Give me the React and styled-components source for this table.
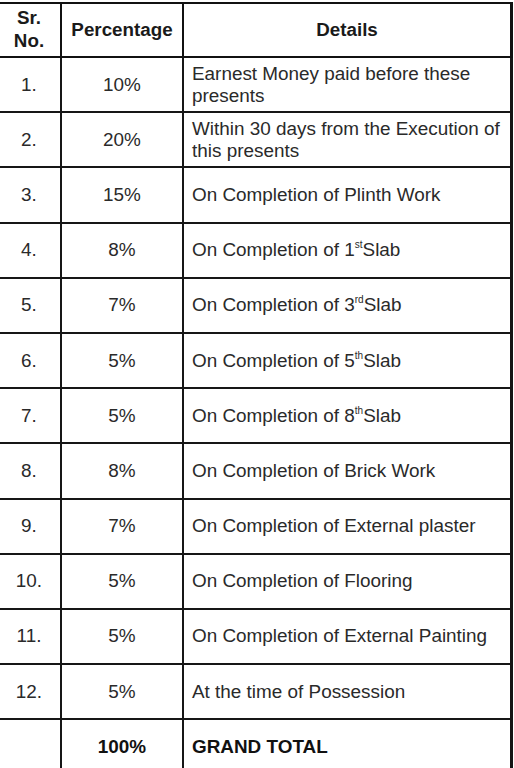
import React from "react";
import styled, { createGlobalStyle } from "styled-components";

const Global = createGlobalStyle`
  html, body { margin: 0; padding: 0; background: #fff; }
  body { font-family: "Liberation Sans", Arial, sans-serif; color: #262626; }
`;

const Page = styled.div`
  width: 514px;
  height: 768px;
  overflow: hidden;
  padding-top: 2px;
  box-sizing: border-box;
`;

const Table = styled.table`
  border-collapse: collapse;
  table-layout: fixed;
  width: 517px;
  margin-left: -4px;
`;

const HeadRow = styled.tr`
  height: 54px;
`;

const Row = styled.tr`
  height: 55.2px;
`;

const HeadCell = styled.th`
  border: 2px solid #111;
  padding: 0 0 2px;
  font-size: 18.8px;
  font-weight: bold;
  line-height: 23px;
  text-align: center;
  color: #1a1a1a;
  &:last-child { border-right-width: 3px; }
`;

const Cell = styled.td`
  border: 2px solid #161616;
  padding: 0 ${(p) => (p.$left ? "8px" : "0")};
  font-size: 18.9px;
  line-height: 22px;
  text-align: ${(p) => (p.$left ? "left" : "center")};
  font-weight: ${(p) => (p.$bold ? "bold" : "normal")};
  color: ${(p) => (p.$bold ? "#111" : "#2a2a2a")};
  &:last-child { border-right-width: 3px; }
`;

const Sup = styled.sup`
  font-size: 10px;
  line-height: 0;
  vertical-align: 8px;
`;

const rows = [
  ["1.", "10%", "Earnest Money paid before these presents"],
  ["2.", "20%", "Within 30 days from the Execution of this presents"],
  ["3.", "15%", "On Completion of Plinth Work"],
  ["4.", "8%", ["1", "st"]],
  ["5.", "7%", ["3", "rd"]],
  ["6.", "5%", ["5", "th"]],
  ["7.", "5%", ["8", "th"]],
  ["8.", "8%", "On Completion of Brick Work"],
  ["9.", "7%", "On Completion of External plaster"],
  ["10.", "5%", "On Completion of Flooring"],
  ["11.", "5%", "On Completion of External Painting"],
  ["12.", "5%", "At the time of Possession"],
];

export default function App() {
  return (
    <Page>
      <Global />
      <Table>
        <colgroup>
          <col style={{ width: 64 }} />
          <col style={{ width: 122 }} />
          <col />
        </colgroup>
        <thead>
          <HeadRow>
            <HeadCell>Sr.<br />No.</HeadCell>
            <HeadCell>Percentage</HeadCell>
            <HeadCell>Details</HeadCell>
          </HeadRow>
        </thead>
        <tbody>
          {rows.map(([n, p, d]) => (
            <Row key={n}>
              <Cell>{n}</Cell>
              <Cell>{p}</Cell>
              <Cell $left>
                {Array.isArray(d) ? (
                  <>On Completion of {d[0]}<Sup>{d[1]}</Sup>Slab</>
                ) : d}
              </Cell>
            </Row>
          ))}
          <Row>
            <Cell></Cell>
            <Cell $bold>100%</Cell>
            <Cell $left $bold>GRAND TOTAL</Cell>
          </Row>
        </tbody>
      </Table>
    </Page>
  );
}
